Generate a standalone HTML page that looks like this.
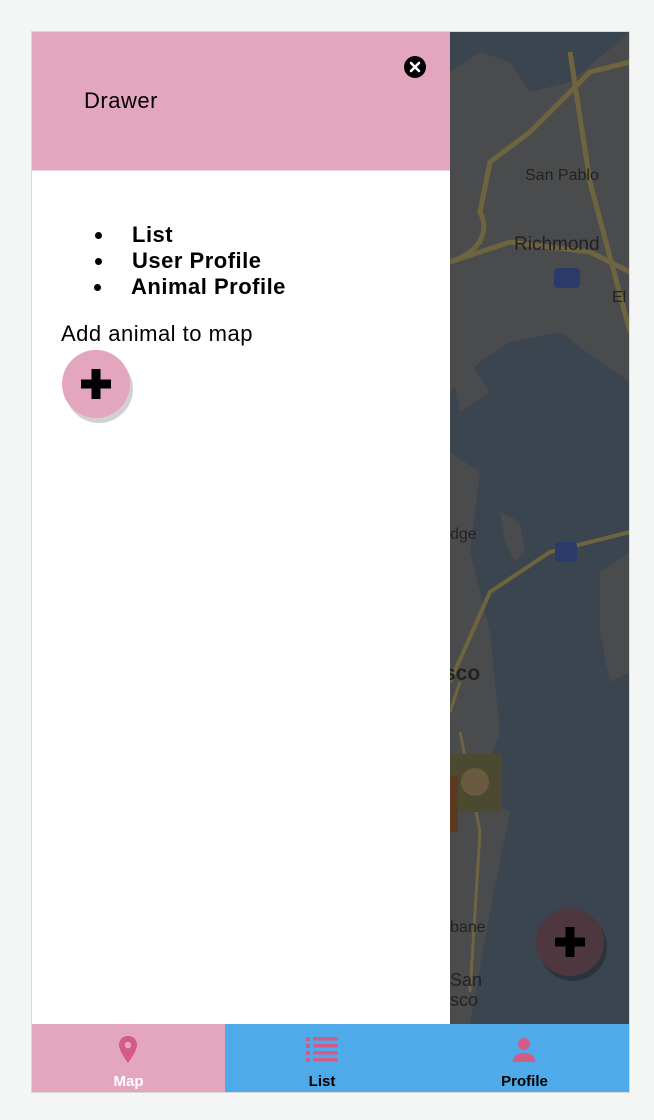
<!DOCTYPE html>
<html><head><meta charset="utf-8"><style>
*{margin:0;padding:0;box-sizing:border-box}
body{width:654px;height:1120px;background:#f4f5f5;font-family:"Liberation Sans",sans-serif;position:relative;overflow:hidden}
#frame{position:absolute;left:31px;top:31px;width:599px;height:1062px;border:1px solid #d8d8d8;background:#fff;overflow:hidden}
#map{position:absolute;left:418px;top:0;width:180px;height:992px;background:#3a4550;overflow:hidden}
#drawer{position:absolute;left:0;top:0;width:418px;height:992px;background:#fff}
#hdr{height:139px;background:#e4a6bf;border-bottom:1px solid #ddd;position:relative}
#hdr .t{position:absolute;left:52px;top:56px;font-size:22px;letter-spacing:.5px;color:#000}
#close{position:absolute;left:372px;top:24px;width:22px;height:22px;border-radius:50%;background:#000}
ul{position:absolute;left:100px;top:190px;font-weight:bold;font-size:22px;letter-spacing:.5px;line-height:26px;list-style:none}
ul li{position:relative}
ul li:before{content:"";position:absolute;left:-37px;top:10px;width:7px;height:7px;border-radius:50%;background:#000}
ul li:last-child{left:-1px}
.add{position:absolute;left:29px;top:289px;font-size:22px;letter-spacing:.5px}
.fab{position:absolute;width:68px;height:68px;border-radius:50%;box-shadow:3px 5px 0 rgba(0,0,0,.18)}
#tabs{position:absolute;left:0;top:992px;width:598px;height:69px;background:#4eaae8}
.tab{position:absolute;top:0;height:69px;text-align:center;font-weight:bold;font-size:15px}
.tab span{position:absolute;left:0;right:0;top:49px}
</style></head><body>
<div id="frame">
<div id="map">
<svg width="180" height="992" viewBox="0 0 180 992">
<path d="M0 40L30 20L60 30L80 60L120 50L180 0V350L150 330L110 300L60 310L30 330L0 360Z" fill="#4a4b4c"/>
<path d="M0 420L30 440L20 520L40 600L50 700L30 760L60 780L40 880L20 992H0Z" fill="#4a4b4c"/>
<path d="M50 480L70 490L75 520L65 530L55 510Z" fill="#4a4b4c"/>
<path d="M150 540L180 520V640L160 650L150 600Z" fill="#4a4b4c"/>
<path d="M0 330L20 330L40 360L10 380Z" fill="#4a4b4c"/>
<path d="M0 680L10 650" stroke="#6e6440" stroke-width="3" fill="none"/>
<path d="M0 230C30 220 40 200 30 180L40 130L80 100L110 70L140 40L180 30" stroke="#6e6440" stroke-width="5" fill="none"/>
<path d="M0 230L60 210L140 220L180 240" stroke="#6e6440" stroke-width="5" fill="none"/>
<path d="M120 20L140 150L180 300" stroke="#6e6440" stroke-width="5" fill="none"/>
<path d="M0 650L40 560L100 520L180 500" stroke="#6e6440" stroke-width="4" fill="none"/>
<path d="M10 700L30 800L20 960" stroke="#6e6440" stroke-width="3" fill="none"/>
<text x="75" y="148" font-size="16" fill="#222" font-family="Liberation Sans">San Pablo</text>
<text x="64" y="218" font-size="19" fill="#222" font-family="Liberation Sans">Richmond</text>
<text x="162" y="270" font-size="16" fill="#222" font-family="Liberation Sans">El C</text>
<text x="0" y="507" font-size="16" fill="#222" font-family="Liberation Sans">dge</text>
<text x="-6" y="648" font-size="21" font-weight="bold" fill="#222" font-family="Liberation Sans">sco</text>
<text x="0" y="900" font-size="16" fill="#222" font-family="Liberation Sans">bane</text>
<text x="0" y="954" font-size="18" fill="#222" font-family="Liberation Sans">San</text>
<text x="0" y="974" font-size="18" fill="#222" font-family="Liberation Sans">sco</text>
<rect x="104" y="236" width="26" height="20" rx="4" fill="#2a3a6a"/>
<rect x="105" y="510" width="22" height="20" rx="4" fill="#2a3a6a"/>
<rect x="0" y="722" width="52" height="58" fill="#4b4a30"/>
<circle cx="25" cy="750" r="14" fill="#6a5a40"/>
<rect x="0" y="744" width="8" height="56" fill="#5a3a20"/>
</svg>
<div class="fab" style="left:86px;top:876px;background:#4e373e;box-shadow:3px 5px 0 rgba(0,0,0,.25)">
<svg width="68" height="68"><path d="M29.5 19h9v10.5H49v9H38.5V49h-9V38.5H19v-9h10.5z" fill="#000"/></svg></div>
</div>
<div id="drawer">
<div id="hdr"><div class="t">Drawer</div>
<div id="close"><svg width="22" height="22"><path d="M7 7L15 15M15 7L7 15" stroke="#fff" stroke-width="2.6" stroke-linecap="round"/></svg></div></div>
<ul><li>List</li><li>User Profile</li><li>Animal Profile</li></ul>
<div class="add">Add animal to map</div>
<div class="fab" style="left:30px;top:318px;background:#e4a6bf">
<svg width="68" height="68"><path d="M29.5 19h9v10.5H49v9H38.5V49h-9V38.5H19v-9h10.5z" fill="#000"/></svg></div>
</div>
<div id="tabs">
<div class="tab" style="left:0;width:193px;background:#e4a6bf;color:#fff">
<svg style="position:absolute;left:85px;top:11px" width="22" height="30" viewBox="0 0 22 30"><path d="M11 1C5.5 1 2 5 2 10c0 6 9 18 9 18s9-12 9-18c0-5-3.5-9-9-9z" fill="#d35b86"/><circle cx="11" cy="10" r="3.3" fill="#e4a6bf"/></svg>
<span>Map</span></div>
<div class="tab" style="left:193px;width:194px">
<svg style="position:absolute;left:81px;top:13px" width="32" height="26"><g fill="#d35b86"><rect x="0" y="0" width="4" height="4"/><rect x="7" y="0" width="25" height="3.5" rx="1.5"/><rect x="0" y="7" width="4" height="4"/><rect x="7" y="7" width="25" height="3.5" rx="1.5"/><rect x="0" y="14" width="4" height="4"/><rect x="7" y="14" width="25" height="3.5" rx="1.5"/><rect x="0" y="21" width="4" height="4"/><rect x="7" y="21" width="25" height="3.5" rx="1.5"/></g></svg>
<span>List</span></div>
<div class="tab" style="left:387px;width:211px">
<svg style="position:absolute;left:94px;top:14px" width="22" height="24"><circle cx="11" cy="6" r="6" fill="#d35b86"/><path d="M0 24c0-7 5-9 11-9s11 2 11 9z" fill="#d35b86"/></svg>
<span>Profile</span></div>
</div>
</div>
</body></html>
